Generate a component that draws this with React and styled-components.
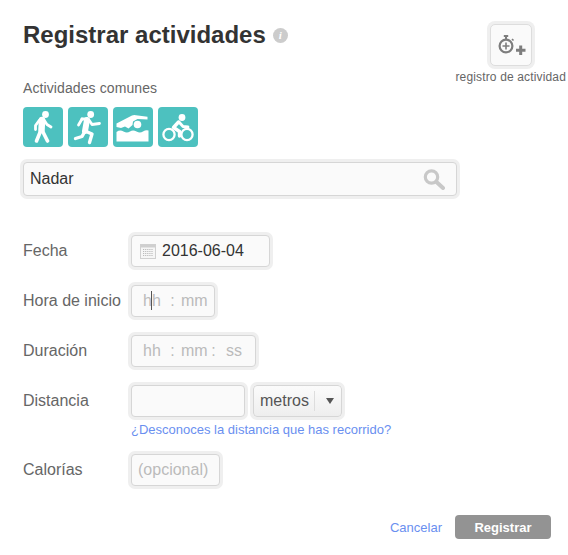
import React from 'react';
import styled, { createGlobalStyle } from 'styled-components';

const Global = createGlobalStyle`
  html, body { margin: 0; padding: 0; background: #fff; }
  body { font-family: "Liberation Sans", Arial, sans-serif; }
  * { box-sizing: border-box; }
`;

const Page = styled.div`
  width: 568px;
  height: 555px;
  padding: 21px 17px 0 23px;
  overflow: hidden;
`;
const Top = styled.div`
  display: flex;
  justify-content: space-between;
`;
const LeftCol = styled.div`
  display: flex;
  flex-direction: column;
`;
const TitleRow = styled.div`
  display: flex;
  align-items: center;
  height: 28px;
  gap: 7px;
`;
const Title = styled.h1`
  margin: 0;
  font-size: 24px;
  line-height: 28px;
  font-weight: 700;
  color: #333;
`;
const Info = styled.span`
  width: 15px;
  height: 15px;
  margin-top: 1px;
  border-radius: 50%;
  background: #ccc;
  color: #fff;
  font: italic 700 11px/15px "Liberation Serif", serif;
  text-align: center;
`;
const Common = styled.div`
  margin-top: 31px;
  font-size: 14px;
  line-height: 16px;
  letter-spacing: 0.1px;
  color: #666;
`;
const Tiles = styled.div`
  display: flex;
  gap: 5px;
  margin-top: 11px;
`;
const Tile = styled.div`
  width: 40px;
  height: 40px;
  border-radius: 4px;
  background: #4dc1bf;
  svg { display: block; }
`;
const LogCol = styled.div`
  display: flex;
  flex-direction: column;
  align-items: center;
  margin-top: 3px;
  margin-right: -15px;
`;
const LogButton = styled.div`
  width: 42px;
  height: 42px;
  border: 1px solid #ddd;
  border-radius: 5px;
  box-shadow: 0 0 0 3px #efefef;
  background: #fafafa;
  svg { display: block; }
`;
const LogLabel = styled.div`
  margin-top: 4px;
  font-size: 12px;
  line-height: 14px;
  letter-spacing: 0.15px;
  color: #666;
  white-space: nowrap;
`;
const Box = styled.div`
  display: flex;
  align-items: center;
  height: 32px;
  width: ${p => p.$w}px;
  padding: 0 ${p => p.$pad ?? 6}px;
  border: 1px solid #d6d6d6;
  border-radius: 4px;
  background: #fafafa;
  box-shadow: 0 0 0 3px #efefef;
  font-size: 16px;
  color: #333;
`;
const SearchBox = styled(Box)`
  height: 34px;
  margin-top: 15px;
  justify-content: space-between;
  padding-right: 11px;
`;
const Fields = styled.div`
  display: flex;
  flex-direction: column;
  gap: 18px;
  margin-top: 39px;
`;
const Row = styled.div`
  display: flex;
  align-items: flex-start;
`;
const Label = styled.div`
  width: 108px;
  flex: none;
  font-size: 16px;
  line-height: 32px;
  color: #666;
`;
const Calendar = styled.svg`
  flex: none;
  margin: 0 6px 0 2px;
`;
const Seg = styled.span`
  position: relative;
  width: 24px;
  text-align: center;
  color: #bbb;
`;
const Colon = styled.span`
  width: 17px;
  text-align: center;
  color: #bbb;
`;
const Caret = styled.span`
  position: absolute;
  left: 11px;
  top: -1px;
  width: 1px;
  height: 19px;
  background: #555;
`;
const Placeholder = styled.span`
  color: #bbb;
`;
const FieldCol = styled.div`
  display: flex;
  flex-direction: column;
`;
const Inline = styled.div`
  display: flex;
  gap: 8px;
`;
const SelectBox = styled(Box)`
  background: linear-gradient(#fbfbfb, #eee);
  padding: 0 0 0 6px;
  color: #555;
`;
const Divider = styled.span`
  width: 1px;
  height: 20px;
  margin-left: 5px;
  background: #ddd;
`;
const Arrow = styled.span`
  margin-left: 11px;
  width: 0;
  height: 0;
  border-left: 4px solid transparent;
  border-right: 4px solid transparent;
  border-top: 6px solid #555;
`;
const Hint = styled.a`
  margin-top: 6px;
  font-size: 13px;
  line-height: 13px;
  color: #6a8ff0;
  white-space: nowrap;
`;
const Footer = styled.div`
  display: flex;
  justify-content: flex-end;
  align-items: center;
  gap: 13px;
  margin-top: 29px;
`;
const Cancel = styled.a`
  font-size: 13px;
  color: #6a8ff0;
`;
const Submit = styled.button`
  width: 96px;
  height: 24px;
  padding: 0;
  border: 0;
  border-radius: 4px;
  background: #939393;
  color: #fff;
  font: 700 13px "Liberation Sans", Arial, sans-serif;
`;

const TileSvg = ({ children }) => (
  <svg width="40" height="40" viewBox="0 0 40 40" fill="none" stroke="#fff" strokeLinecap="round" strokeLinejoin="round">
    {children}
  </svg>
);

const Walk = () => (
  <TileSvg>
    <circle cx="22.5" cy="7.5" r="3.4" fill="#fff" stroke="none" />
    <path d="M19 13 L18.5 23" strokeWidth="6.5" />
    <path d="M16.5 13 L12.5 18.5 L12.5 22.5" strokeWidth="2.8" />
    <path d="M21 13 L24 17.5 L28 20" strokeWidth="2.8" />
    <path d="M18 23 L13.5 34" strokeWidth="3.6" />
    <path d="M19 23 L24.5 34" strokeWidth="3.6" />
  </TileSvg>
);
const Run = () => (
  <TileSvg>
    <circle cx="22.7" cy="7.5" r="3.4" fill="#fff" stroke="none" />
    <path d="M19 13 L17 24" strokeWidth="6" />
    <path d="M14 12 L10.5 18" strokeWidth="2.8" />
    <path d="M14 12 L19 12" strokeWidth="2.8" />
    <path d="M21 13 L24 17.5 L31.5 16.5" strokeWidth="2.8" />
    <path d="M16.5 25 L14 29.5 L7.5 31.5" strokeWidth="3.4" />
    <path d="M17 24 L24 27 L21.5 35.5" strokeWidth="3.4" />
  </TileSvg>
);
const Swim = () => (
  <TileSvg>
    <circle cx="24.5" cy="17.5" r="3.8" fill="#fff" stroke="none" />
    <path d="M3.5 20 L3.5 16.5 L19 8.5 Q21 7.7 23 8.3 L34.5 9.8 L34.5 12.5 L24.5 12 L20 14.5 L19.5 18 L15.5 21.5 L12 19.5 L8 21 Z" fill="#fff" stroke="none" />
    <path d="M3.5 25 Q7 22.5 10.5 24.5 T17 24.5 T23.5 24.5 T30 24.5 T35.5 23.5 L35.5 34.5 L3.5 34.5 Z" fill="#fff" stroke="none" />
  </TileSvg>
);
const Bike = () => (
  <TileSvg>
    <circle cx="24" cy="10.5" r="3.4" fill="#fff" stroke="none" />
    <circle cx="11" cy="27.5" r="5.6" strokeWidth="2.3" />
    <circle cx="29" cy="27.5" r="5.6" strokeWidth="2.3" />
    <path d="M20.5 15 L15.5 20.5 L21.5 24.5 L21.5 29" strokeWidth="3.4" />
    <path d="M21 15 L25 19.5 L30 20" strokeWidth="2.8" />
  </TileSvg>
);

const Stopwatch = () => (
  <svg width="40" height="40" viewBox="0 0 40 40" fill="none" stroke="#7d7d7d">
    <circle cx="15" cy="21" r="6.4" strokeWidth="2.2" />
    <path d="M15 17.5 V24.5 M11.5 21 H18.5" strokeWidth="1.6" />
    <path d="M12.8 11 H17.2 M15 11 V14" strokeWidth="2" />
    <path d="M21 14 L22.5 15.5" strokeWidth="1.6" />
    <path d="M29.7 20.5 V30 M25 25.2 H34.5" strokeWidth="3" />
  </svg>
);
const SearchIcon = () => (
  <svg width="22" height="22" viewBox="0 0 22 22" fill="none" stroke="#c8c8c8" strokeLinecap="round">
    <circle cx="8.5" cy="9" r="6.2" strokeWidth="3.2" />
    <path d="M13.5 14 L20 20" strokeWidth="4" />
  </svg>
);
const CalendarIcon = () => (
  <Calendar width="16" height="16" viewBox="0 0 16 16" fill="none">
    <rect x="0.5" y="1.5" width="15" height="14" fill="#f6f6f6" stroke="#d0d0d0" />
    <rect x="1" y="2" width="14" height="2.5" fill="#cfcfcf" />
    <path d="M3 6.5h10M3 8.5h10M3 10.5h10M3 12.5h10" stroke="#bbb" strokeWidth="1" strokeDasharray="1.2 0.9" />
  </Calendar>
);

export default function App() {
  return (
    <Page>
      <Global />
      <Top>
        <LeftCol>
          <TitleRow>
            <Title>Registrar actividades</Title>
            <Info>i</Info>
          </TitleRow>
          <Common>Actividades comunes</Common>
          <Tiles>
            <Tile><Walk /></Tile>
            <Tile><Run /></Tile>
            <Tile><Swim /></Tile>
            <Tile><Bike /></Tile>
          </Tiles>
        </LeftCol>
        <LogCol>
          <LogButton><Stopwatch /></LogButton>
          <LogLabel>registro de actividad</LogLabel>
        </LogCol>
      </Top>
      <SearchBox $w={434}>
        <span>Nadar</span>
        <SearchIcon />
      </SearchBox>
      <Fields>
        <Row>
          <Label>Fecha</Label>
          <Box $w={139}>
            <CalendarIcon />
            <span>2016-06-04</span>
          </Box>
        </Row>
        <Row>
          <Label>Hora de inicio</Label>
          <Box $w={84} $pad={8}>
            <Seg>hh<Caret /></Seg>
            <Colon>:</Colon>
            <Seg>mm</Seg>
          </Box>
        </Row>
        <Row>
          <Label>Duración</Label>
          <Box $w={125} $pad={8}>
            <Seg>hh</Seg>
            <Colon>:</Colon>
            <Seg>mm</Seg>
            <Colon>:</Colon>
            <Seg>ss</Seg>
          </Box>
        </Row>
        <Row>
          <Label>Distancia</Label>
          <FieldCol>
            <Inline>
              <Box $w={114} />
              <SelectBox $w={89}>
                <span>metros</span>
                <Divider />
                <Arrow />
              </SelectBox>
            </Inline>
            <Hint>¿Desconoces la distancia que has recorrido?</Hint>
          </FieldCol>
        </Row>
        <Row>
          <Label>Calorías</Label>
          <Box $w={89}>
            <Placeholder>(opcional)</Placeholder>
          </Box>
        </Row>
      </Fields>
      <Footer>
        <Cancel>Cancelar</Cancel>
        <Submit>Registrar</Submit>
      </Footer>
    </Page>
  );
}
